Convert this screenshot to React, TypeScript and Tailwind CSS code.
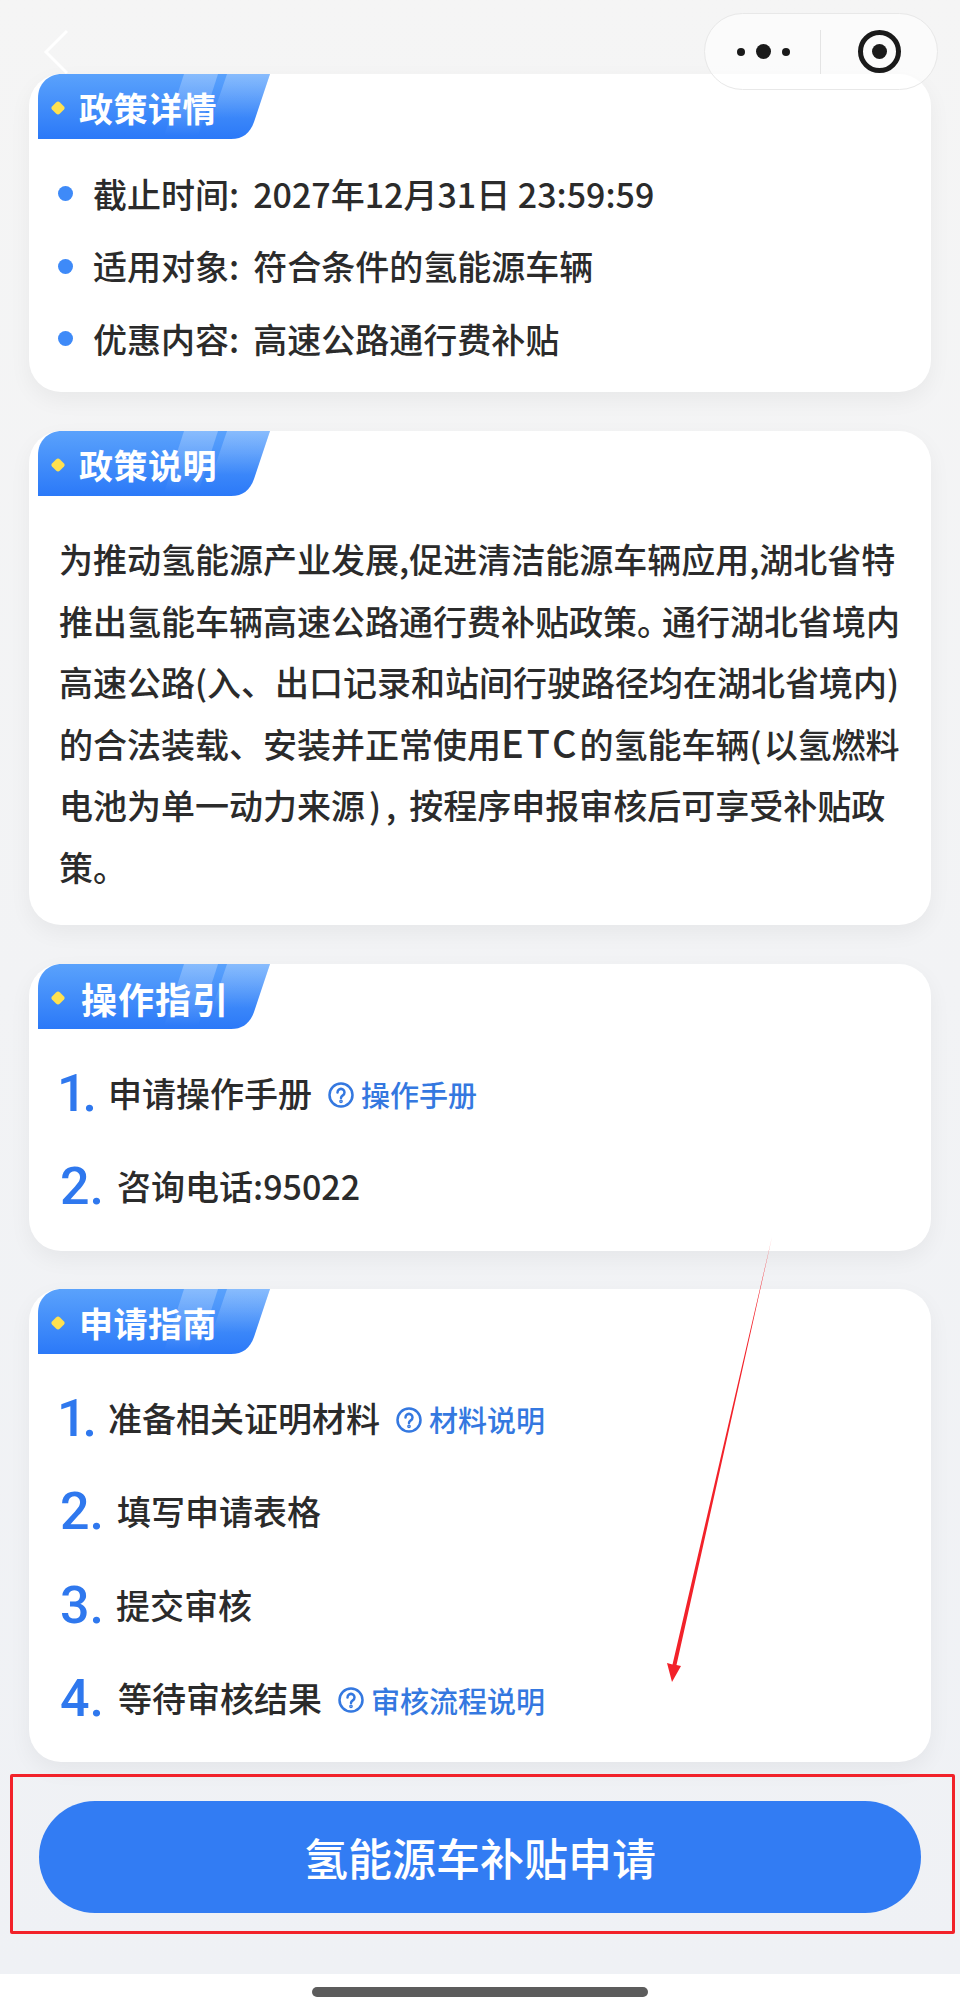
import React from "react";

const font = { fontFamily: '"Noto Sans CJK SC", "Noto Sans", sans-serif' };

function Tag({ title, wide, first }: { title: string; wide?: boolean; first?: boolean }) {
  return (
    <div className={`relative w-[232px] h-[65px] ml-[9px] flex items-center ${first ? "mt-[2px]" : "mt-[3px]"}`}>
      <svg className="absolute inset-0" width="232" height="65" viewBox="0 0 232 65">
        <defs>
          <linearGradient id="tagfill" x1="0" y1="0" x2="0" y2="1">
            <stop offset="0" stopColor="#5aa2fc" />
            <stop offset="1" stopColor="#2b79f8" />
          </linearGradient>
          <linearGradient id="tagshine" x1="0" y1="0" x2="0" y2="1">
            <stop offset="0" stopColor="#ffffff" stopOpacity="0.28" />
            <stop offset="1" stopColor="#ffffff" stopOpacity="0" />
          </linearGradient>
        </defs>
        <path d="M0 65V24C0 10 10 0 24 0H232L216 48C212 59 205 65 193 65Z" fill="url(#tagfill)" />
        <path d="M146 0H180L160 62H126Z" fill="url(#tagshine)" />
        <path d="M189 0H232L218 44H174Z" fill="url(#tagshine)" />
        <path d="M20 27.500Q21 27.500 22 28.500L26 32.500Q27.500 34 26 35.500L22 39.500Q20 41.500 18 39.500L14 35.500Q12.500 34 14 32.500L18 28.500Q19 27.500 20 27.500Z" fill="#ffe14f" />
      </svg>
      <span className={`relative text-white font-bold leading-none pt-[3px] ${wide ? "ml-[43px] text-[36px] tracking-[1px]" : "ml-[41px] text-[34px] tracking-[0.5px]"}`}>{title}</span>
    </div>
  );
}

function Help({ label, className }: { label: string; className: string }) {
  return (
    <span className={`flex items-center gap-[7px] text-[#3478e0] text-[29px] font-medium leading-none pt-[2px] ${className}`}>
      <svg width="26" height="26" viewBox="0 0 26 26" fill="none" stroke="#3478e0" strokeWidth="2.5" strokeLinecap="round">
        <circle cx="13" cy="13" r="11.5" />
        <path d="M9.5 10.4a3.5 3.5 0 1 1 5.3 3c-1.2.8-1.8 1.4-1.8 2.6" />
        <circle cx="13" cy="19.3" r="0.6" fill="#3478e0" />
      </svg>
      {label}
    </span>
  );
}

function Step({ n, text, gap, help, helpGap }: { n: number; text: string; gap: string; help?: string; helpGap?: string }) {
  return (
    <div className="flex items-center h-[93.5px]">
      <span
        className={`text-[#2f78ee] text-[52px] font-medium leading-none ${n === 1 ? "-ml-[3px] tracking-[-4px]" : ""}`}
        style={{ fontFamily: "Roboto, sans-serif" }}
      >
        {n}.
      </span>
      <span className={`text-[#2b2b2b] text-[34px] font-medium leading-none pb-[2px] ${gap}`}>{text}</span>
      {help && <Help label={help} className={helpGap ?? "ml-[16px]"} />}
    </div>
  );
}

function Bullet({ label, value }: { label: string; value: string }) {
  return (
    <li className="flex items-center h-[72.5px] pt-[1px]">
      <span className="w-[15px] h-[15px] rounded-full bg-[#3e8af8] shrink-0" />
      <span className="ml-[20px] text-[34px] font-medium leading-none text-[#2b2b2b]">{label}</span>
      <span className="ml-[14px] text-[34px] font-medium leading-none text-[#2b2b2b]">{value}</span>
    </li>
  );
}

const card = "bg-white rounded-[32px] mx-[29px] w-[902px] shadow-[0_8px_22px_rgba(0,0,0,0.05)]";

export default function App() {
  return (
    <div style={font} className="relative w-[960px] h-[2010px] overflow-hidden bg-white">
      <div className="h-[1974px] pt-[72px] bg-gradient-to-b from-[#f5f5f5] to-[#eff1f5]">
        <section className={`${card} h-[318px]`}>
          <Tag title="政策详情" first />
          <ul className="pl-[29px] pt-[18px]">
            <Bullet label="截止时间:" value="2027年12月31日 23:59:59" />
            <Bullet label="适用对象:" value="符合条件的氢能源车辆" />
            <Bullet label="优惠内容:" value="高速公路通行费补贴" />
          </ul>
        </section>

        <section className={`${card} h-[494px] mt-[39px]`}>
          <Tag title="政策说明" />
          <div className="pl-[30px] pt-[32px] text-[34px] font-medium leading-[61.5px] text-[#2b2b2b] whitespace-nowrap">
            <p>为推动氢能源产业发展,促进清洁能源车辆应用,湖北省特</p>
            <p>推出氢能车辆高速公路通行费补贴政策<span className="tracking-[-9px]">。</span>通行湖北省境内</p>
            <p>高速公路(入、出口记录和站间行驶路径均在湖北省境内)</p>
            <p>的合法装载、安装并正常使用<span className="text-[38px] leading-none tracking-[3px]">ETC</span>的氢能车辆<span className="mr-[2px]">(</span>以氢燃料</p>
            <p>电池为单一动力来源<span className="ml-[4px]">)</span><span className="ml-[5px] mr-[13px]">,</span>按程序申报审核后可享受补贴政</p>
            <p>策。</p>
          </div>
        </section>

        <section className={`${card} h-[287px] mt-[39px]`}>
          <Tag title="操作指引" wide />
          <div className="pl-[31px] pt-[18px]">
            <Step n={1} text="申请操作手册" gap="ml-[15px]" help="操作手册" />
            <Step n={2} text="咨询电话:95022" gap="ml-[13px]" />
          </div>
        </section>

        <section className={`${card} h-[473px] mt-[38px]`}>
          <Tag title="申请指南" />
          <div className="pl-[31px] pt-[18px]">
            <Step n={1} text="准备相关证明材料" gap="ml-[15px]" help="材料说明" />
            <Step n={2} text="填写申请表格" gap="ml-[13px]" />
            <Step n={3} text="提交审核" gap="ml-[12px]" />
            <Step n={4} text="等待审核结果" gap="ml-[14px]" help="审核流程说明" />
          </div>
        </section>

        <div className="relative mt-[12px] mx-[10px] w-[945px] h-[160px] border-[3px] border-[#f2222a] rounded-[2px] px-[26px] pt-[24px]">
          <button className="w-[882px] h-[112px] rounded-full bg-[#327cf3] text-white text-[44px] font-medium leading-none">
            氢能源车补贴申请
          </button>
        </div>
      </div>

      <div className="h-[36px] flex items-center justify-center">
        <div className="w-[336px] h-[10px] rounded-full bg-[#5c5c5c]" />
      </div>

      {/* Mini-program chrome overlay */}
      <svg className="absolute left-[40px] top-[28px]" width="32" height="48" viewBox="0 0 32 48" fill="none" stroke="#ffffff" strokeWidth="3">
        <path d="M27 3L6 24L27 45" />
      </svg>
      <div className="absolute left-[704px] top-[13px] w-[234px] h-[77px] rounded-full border border-[#e8e8e8] bg-white/60 flex items-center">
        <div className="w-[115px] flex items-center justify-center pl-[2px] gap-[11px]">
          <span className="w-[8px] h-[8px] rounded-full bg-[#1a1a1a]" />
          <span className="w-[15px] h-[15px] rounded-full bg-[#1a1a1a]" />
          <span className="w-[8px] h-[8px] rounded-full bg-[#1a1a1a]" />
        </div>
        <div className="w-px h-[44px] bg-[#e4e4e4]" />
        <div className="flex-1 flex items-center justify-center">
          <span className="w-[43px] h-[43px] rounded-full border-[5px] border-[#1a1a1a] flex items-center justify-center">
            <span className="w-[15px] h-[15px] rounded-full bg-[#1a1a1a]" />
          </span>
        </div>
      </div>

      {/* Red annotation arrow */}
      <svg className="absolute left-[660px] top-[1235px]" width="120" height="450" viewBox="660 1235 120 450">
        <path d="M772 1237L676.500 1665L681 1666L672 1682L667 1663L672.500 1664.500Z" fill="#f2222a" />
      </svg>
    </div>
  );
}
